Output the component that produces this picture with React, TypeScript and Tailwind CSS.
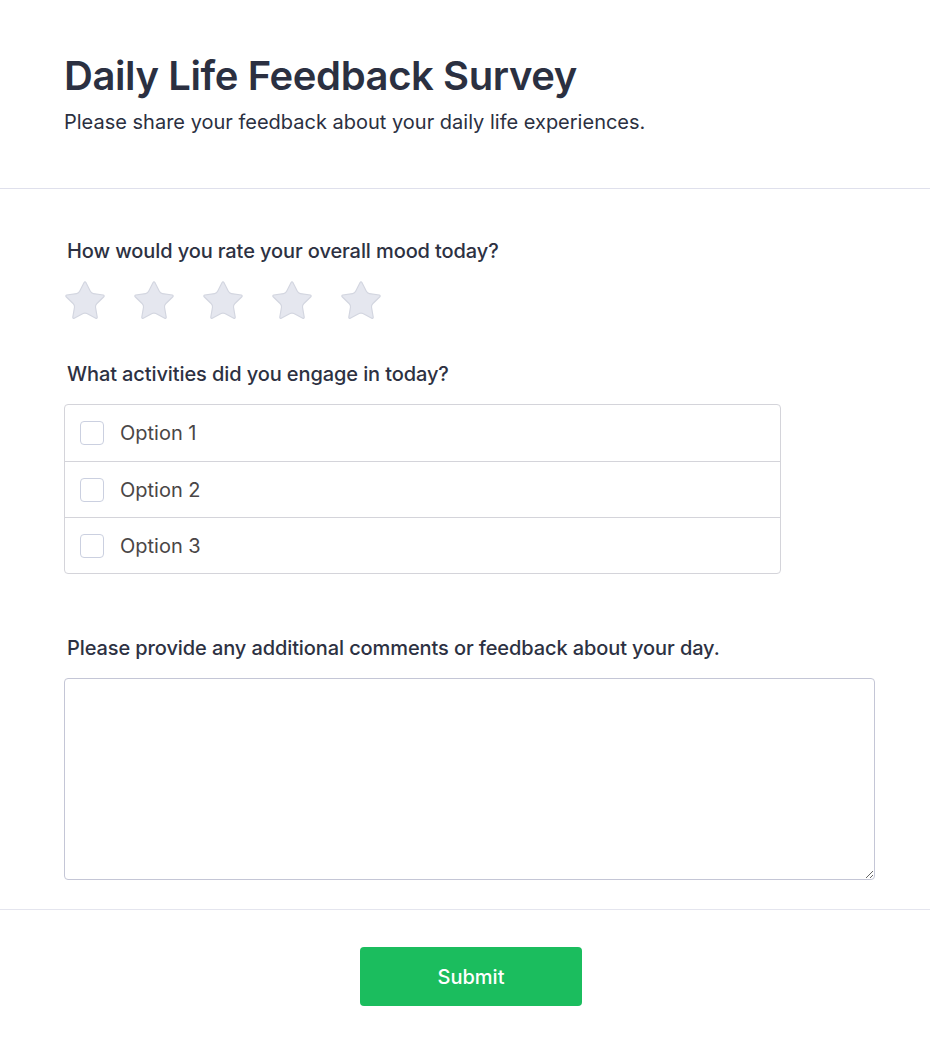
import React from "react";

const StarIcon = () => (
  <svg width="46" height="46" viewBox="0 0 24 24" fill="#e5e7ef" stroke="#d3d6e0" strokeWidth="0.6" strokeLinejoin="round">
    <path d="M11.525 2.295a.53.53 0 0 1 .95 0l2.31 4.679a2.123 2.123 0 0 0 1.595 1.16l5.166.756a.53.53 0 0 1 .294.904l-3.736 3.638a2.123 2.123 0 0 0-.611 1.878l.882 5.14a.53.53 0 0 1-.771.56l-4.618-2.428a2.122 2.122 0 0 0-1.973 0L6.396 21.01a.53.53 0 0 1-.77-.56l.881-5.139a2.122 2.122 0 0 0-.611-1.879L2.16 9.795a.53.53 0 0 1 .294-.906l5.165-.755a2.122 2.122 0 0 0 1.597-1.16z" />
  </svg>
);

export default function App() {
  const font = { fontFamily: "Inter, 'Noto Sans', sans-serif" };
  return (
    <div className="min-h-[1056px] bg-white text-[#2d3142]" style={font}>
      <header className="px-16 pt-[52px] pb-[52px] border-b border-[#dfe0ec]">
        <h1 className="text-[40px] leading-[48px] font-semibold tracking-[-0.01em] text-[#2b3041]">Daily Life Feedback Survey</h1>
        <p className="mt-[8px] text-[20px] leading-[28px] text-[#2b3041]">Please share your feedback about your daily life experiences.</p>
      </header>

      <main className="pl-16 pt-[48px] pb-[29px] border-b border-[#e4e5ee]">
        <section>
          <label className="block pl-[3px] text-[20px] leading-[28px] font-medium tracking-[-0.005em] text-[#2d3142]">How would you rate your overall mood today?</label>
          <div className="mt-[13px] -ml-[2px] flex gap-[23px]">
            {[0, 1, 2, 3, 4].map((i) => (
              <button key={i} className="w-[46px] h-[46px] flex items-center justify-center">
                <StarIcon />
              </button>
            ))}
          </div>
        </section>

        <section className="mt-[36px]">
          <label className="block pl-[3px] text-[20px] leading-[28px] font-medium tracking-[-0.005em] text-[#2d3142]">What activities did you engage in today?</label>
          <div className="mt-[16px] w-[717px] border border-[#d4d4da] rounded-[4px]">
            {["Option 1", "Option 2", "Option 3"].map((o, i) => (
              <label key={o} className={`flex items-center h-[56px] px-[15px] gap-[16px] ${i > 0 ? "border-t border-[#d4d4da]" : ""}`}>
                <span className="w-[24px] h-[24px] rounded-[4px] border border-[#cbd0e0] bg-white" />
                <span className="text-[20px] text-[#4a4646]">{o}</span>
              </label>
            ))}
          </div>
        </section>

        <section className="mt-[60px]">
          <label className="block pl-[3px] text-[20px] leading-[28px] font-medium tracking-[-0.005em] text-[#2d3142]">Please provide any additional comments or feedback about your day.</label>
          <textarea className="mt-[16px] block w-[811px] h-[202px] border border-[#c4c6d6] rounded-[4px] outline-none p-3"></textarea>
        </section>
      </main>

      <footer className="flex justify-center pl-[12px] pt-[37px] pb-[50px]">
        <button className="w-[222px] h-[59px] rounded-[4px] bg-[#1bbd5e] text-white text-[20px] font-medium">Submit</button>
      </footer>
    </div>
  );
}
